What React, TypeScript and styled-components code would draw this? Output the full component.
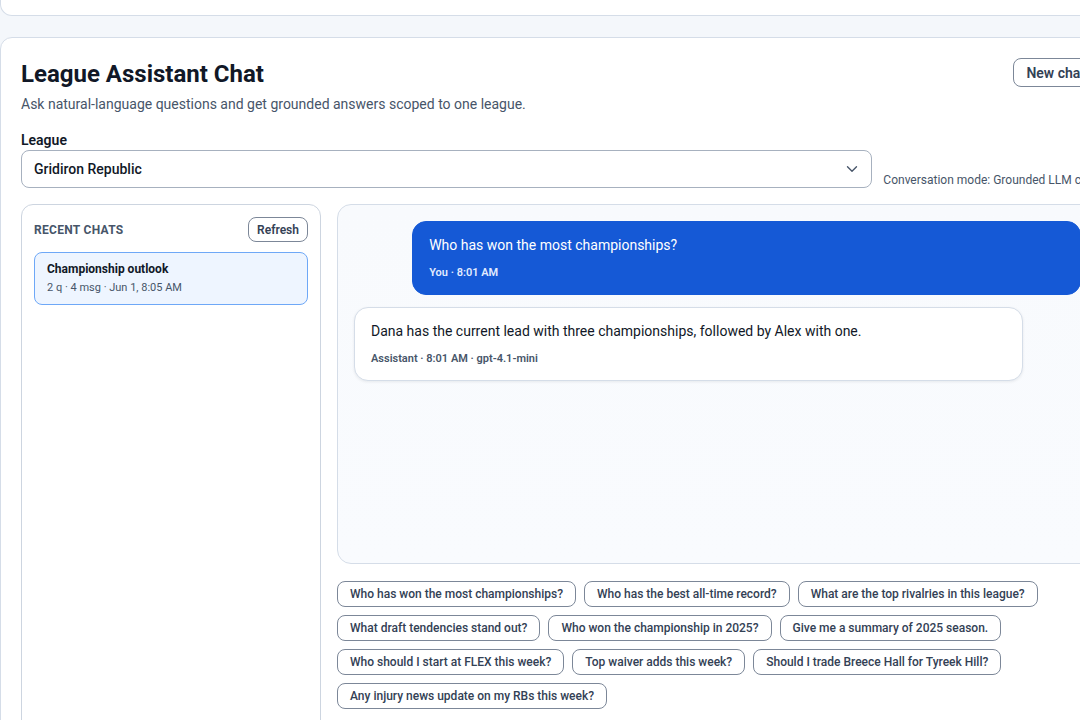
import styled, { createGlobalStyle } from "styled-components"
import { ChevronDown } from "lucide-react"

const GlobalStyle = createGlobalStyle`
html, body {
  margin: 0;
  padding: 0;
  overflow: hidden;
  background: #f4f7fb;
  font-family: Roboto, "Liberation Sans", Arial, sans-serif;
  color: #0f172a;
}
* { box-sizing: border-box; }
`

const Page = styled.div`
width: 1119px;
display: flex;
flex-direction: column;
gap: 21px;
`

const TopCard = styled.div`
height: 16px;
background: #fff;
border: 1px solid #d5dde8;
border-top: none;
border-radius: 0 0 12px 12px;
`

const Card = styled.section`
background: #fff;
border: 1px solid #d5dde8;
border-radius: 12px;
padding: 20px;
display: flex;
flex-direction: column;
`

const Header = styled.div`
display: flex;
justify-content: space-between;
align-items: flex-start;
`

const Title = styled.h1`
margin: 0;
font-size: 24px;
line-height: 32px;
font-weight: 700;
color: #111827;
`

const Subtitle = styled.p`
margin: 4px 0 0;
font-size: 14px;
line-height: 20px;
color: #475569;
`

const OutlineButton = styled.button<{ $small?: boolean }>`
font-family: inherit;
background: #fff;
border: 1px solid #7c8798;
border-radius: 8px;
color: #334155;
font-weight: 600;
cursor: pointer;
font-size: ${p => (p.$small ? "12px" : "14px")};
height: ${p => (p.$small ? "25px" : "29px")};
padding: ${p => (p.$small ? "0 8px" : "0 12px")};
`

const LeagueRow = styled.div`
display: flex;
align-items: flex-end;
gap: 11px;
margin-top: 16px;
`

const Field = styled.label`
flex: 1;
display: flex;
flex-direction: column;
`

const Label = styled.span`
font-size: 14px;
line-height: 20px;
font-weight: 600;
color: #111827;
`

const Select = styled.div`
height: 38px;
border: 1px solid #a7b1bf;
border-radius: 8px;
display: flex;
align-items: center;
justify-content: space-between;
padding: 0 10px 0 12px;
font-size: 14px;
font-weight: 500;
color: #111827;
`

const ModeText = styled.span`
font-size: 12px;
line-height: 16px;
color: #475569;
white-space: nowrap;
`

const Workspace = styled.div`
display: grid;
grid-template-columns: 300px 1fr;
gap: 16px;
margin-top: 16px;
`

const Sidebar = styled.aside`
border: 1px solid #cdd5e0;
border-radius: 12px;
padding: 12px;
display: flex;
flex-direction: column;
gap: 10px;
`

const SidebarHead = styled.div`
display: flex;
justify-content: space-between;
align-items: center;
`

const SidebarTitle = styled.span`
font-size: 12px;
font-weight: 700;
letter-spacing: 0.3px;
color: #475569;
text-transform: uppercase;
`

const ChatItem = styled.div<{ $active?: boolean }>`
border: 1px solid ${p => (p.$active ? "#6ea8f7" : "#d5dde8")};
background: ${p => (p.$active ? "#eef5ff" : "#fff")};
border-radius: 8px;
padding: 8px 12px;
`

const ItemTitle = styled.div`
font-size: 12px;
line-height: 16px;
font-weight: 700;
color: #111827;
`

const ItemMeta = styled.div`
margin-top: 3px;
font-size: 11px;
line-height: 16px;
color: #475569;
`

const Main = styled.div`
display: flex;
flex-direction: column;
gap: 17px;
min-width: 0;
`

const Thread = styled.div`
height: 360px;
border: 1px solid #d5dde8;
border-radius: 14px;
background: linear-gradient(180deg, #f8fafd 0%, #f9fbfe 100%);
padding: 16px;
display: flex;
flex-direction: column;
gap: 12px;
`

const Bubble = styled.div<{ $mine?: boolean }>`
width: 92%;
align-self: ${p => (p.$mine ? "flex-end" : "flex-start")};
border-radius: 14px;
padding: 13px 16px;
border: 1px solid ${p => (p.$mine ? "#1559d6" : "#d5dde8")};
background: ${p => (p.$mine ? "#1559d6" : "#fff")};
color: ${p => (p.$mine ? "#fff" : "#111827")};
box-shadow: ${p => (p.$mine ? "none" : "0 1px 3px rgba(15, 23, 42, 0.08)")};
`

const BubbleText = styled.div`
font-size: 14px;
line-height: 20px;
`

const BubbleMeta = styled.div<{ $mine?: boolean }>`
margin-top: 10px;
font-size: 11px;
line-height: 16px;
font-weight: 600;
color: ${p => (p.$mine ? "#e2ecff" : "#475569")};
`

const Chips = styled.div`
display: flex;
flex-wrap: wrap;
gap: 8px;
`

const Chip = styled.button`
font-family: inherit;
height: 26px;
padding: 0 12px;
border: 1px solid #7c8798;
border-radius: 8px;
background: #fff;
color: #334155;
font-size: 12px;
font-weight: 500;
cursor: pointer;
`

const Composer = styled.div`
display: flex;
gap: 10px;
`

const Input = styled.textarea`
flex: 1;
height: 80px;
border: 1px solid #a7b1bf;
border-radius: 10px;
padding: 10px 12px;
font-family: inherit;
font-size: 14px;
resize: none;
`

const suggestions = [
  "Who has won the most championships?",
  "Who has the best all-time record?",
  "What are the top rivalries in this league?",
  "What draft tendencies stand out?",
  "Who won the championship in 2025?",
  "Give me a summary of 2025 season.",
  "Who should I start at FLEX this week?",
  "Top waiver adds this week?",
  "Should I trade Breece Hall for Tyreek Hill?",
  "Any injury news update on my RBs this week?",
]

export default function App() {
  return (
    <>
      <GlobalStyle />
      <Page>
        <TopCard />
        <Card>
          <Header>
            <div>
              <Title>League Assistant Chat</Title>
              <Subtitle>Ask natural-language questions and get grounded answers scoped to one league.</Subtitle>
            </div>
            <OutlineButton>New chat</OutlineButton>
          </Header>

          <LeagueRow>
            <Field>
              <Label>League</Label>
              <Select>
                <span>Gridiron Republic</span>
                <ChevronDown size={18} color="#475569" strokeWidth={1.8} />
              </Select>
            </Field>
            <ModeText>Conversation mode: Grounded LLM chat</ModeText>
          </LeagueRow>

          <Workspace>
            <Sidebar>
              <SidebarHead>
                <SidebarTitle>Recent chats</SidebarTitle>
                <OutlineButton $small>Refresh</OutlineButton>
              </SidebarHead>
              <ChatItem $active>
                <ItemTitle>Championship outlook</ItemTitle>
                <ItemMeta>2 q · 4 msg · Jun 1, 8:05 AM</ItemMeta>
              </ChatItem>
            </Sidebar>

            <Main>
              <Thread>
                <Bubble $mine>
                  <BubbleText>Who has won the most championships?</BubbleText>
                  <BubbleMeta $mine>You · 8:01 AM</BubbleMeta>
                </Bubble>
                <Bubble>
                  <BubbleText>Dana has the current lead with three championships, followed by Alex with one.</BubbleText>
                  <BubbleMeta>Assistant · 8:01 AM · gpt-4.1-mini</BubbleMeta>
                </Bubble>
              </Thread>

              <Chips>
                {suggestions.map(s => (
                  <Chip key={s}>{s}</Chip>
                ))}
              </Chips>

              <Composer>
                <Input placeholder="Ask about this league..." />
                <OutlineButton>Send</OutlineButton>
              </Composer>
            </Main>
          </Workspace>
        </Card>
      </Page>
    </>
  )
}
